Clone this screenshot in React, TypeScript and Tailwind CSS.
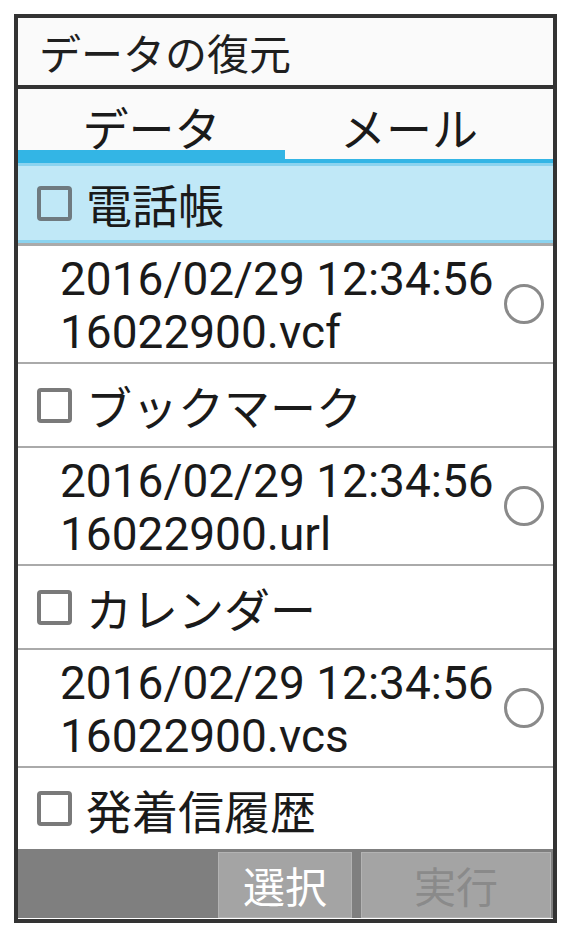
import React from 'react';

const jp = "font-['Noto_Sans_CJK_JP',sans-serif]";
const num = "font-['Roboto','Noto_Sans_CJK_JP',sans-serif]";

function CheckRow({ label, selected, last }: { label: string; selected?: boolean; last?: boolean }) {
  if (selected) {
    return (
      <div className="border-b-[3px] border-[#aaaaaa]">
        <div className="flex h-[80px] items-center border-y-[3px] border-[#8bd3ef] bg-[#c0e8f7]">
          <div className="ml-[19px] h-[35px] w-[35px] rounded-[4px] border-[4px] border-[#6f7a80]" />
          <span className={`${jp} ml-[14px] text-[46px] leading-none text-[#1a1a1a]`}>{label}</span>
        </div>
      </div>
    );
  }
  return (
    <div className={`flex items-center ${last ? 'h-[81px]' : 'h-[84px] border-b-2 border-[#aaaaaa]'}`}>
      <div className="ml-[19px] h-[35px] w-[35px] rounded-[4px] border-[4px] border-[#7a7a7a]" />
      <span className={`${jp} ml-[14px] text-[46px] leading-none text-[#1a1a1a]`}>{label}</span>
    </div>
  );
}

function FileRow({ date, file }: { date: string; file: string }) {
  return (
    <div className="flex h-[118px] items-center justify-between border-b-2 border-[#aaaaaa]">
      <div className={`${num} pl-[42px] pt-[4px] text-[46px] leading-[53px] whitespace-nowrap text-[#1a1a1a]`}>
        <div>{date}</div>
        <div>{file}</div>
      </div>
      <div className="mr-[9px] h-[40px] w-[40px] shrink-0 rounded-full border-[3px] border-[#8a8a8a]" />
    </div>
  );
}

export default function App() {
  return (
    <div className="h-[938px] w-[571px] bg-white pl-[14px] pt-[14px]">
      <div className="flex h-[909px] w-[543px] flex-col border-4 border-[#333333]">
        <div className="flex h-[67px] items-center bg-[#fafafa] pl-[21px]">
          <span className={`${jp} text-[42px] leading-none text-[#1f1f1f]`}>データの復元</span>
        </div>
        <div className="h-[4px] bg-[#333333]" />

        <div className="flex h-[74px] border-b-4 border-[#33b5e5] bg-[#fafafa]">
          <div className="flex w-[267px] flex-col">
            <div className="flex flex-1 items-center justify-center pt-[13px]">
              <span className={`${jp} text-[46px] leading-none text-[#1a1a1a]`}>データ</span>
            </div>
            <div className="h-[9px] bg-[#33b5e5]" />
          </div>
          <div className="flex flex-1 flex-col">
            <div className="flex flex-1 items-center justify-center pt-[13px] pr-[20px]">
              <span className={`${jp} text-[46px] leading-none text-[#1a1a1a]`}>メール</span>
            </div>
            <div className="h-[9px]" />
          </div>
        </div>

        <CheckRow label="電話帳" selected />
        <FileRow date="2016/02/29 12:34:56" file="16022900.vcf" />
        <CheckRow label="ブックマーク" />
        <FileRow date="2016/02/29 12:34:56" file="16022900.url" />
        <CheckRow label="カレンダー" />
        <FileRow date="2016/02/29 12:34:56" file="16022900.vcs" />
        <CheckRow label="発着信履歴" last />

        <div className="flex h-[69px] justify-end gap-[9px] bg-[#7f7f7f] pr-[2px] pt-[3px]">
          <div className="flex w-[134px] items-center justify-center border border-[#b3b3b3] bg-[#a4a4a4]">
            <span className={`${jp} text-[42px] leading-none text-white`}>選択</span>
          </div>
          <div className="flex w-[190px] items-center justify-center border border-[#b3b3b3] bg-[#a4a4a4]">
            <span className={`${jp} text-[42px] leading-none text-[#8a8a8a]`}>実行</span>
          </div>
        </div>
      </div>
    </div>
  );
}
